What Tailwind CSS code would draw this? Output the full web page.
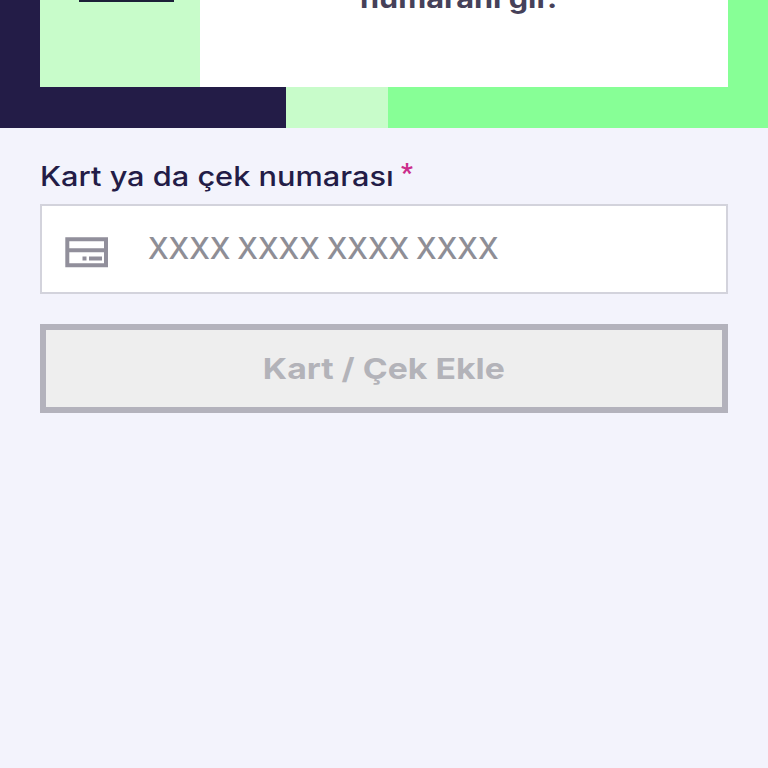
<!DOCTYPE html>
<html lang="tr">
<head>
<meta charset="utf-8">
<title>Kart / Çek Ekle</title>
<script src="https://cdn.jsdelivr.net/npm/@tailwindcss/browser@4"></script>
</head>
<body class="h-[768px] overflow-hidden bg-[#f3f3fc] font-['Inter',sans-serif] text-[#231c47]">
<header class="relative h-32 overflow-hidden">
  <div class="absolute inset-x-0 top-0 flex h-[127.5px]">
    <div class="w-[286px] bg-[#231c47]"></div>
    <div class="w-[101.5px] bg-[#c8fcca]"></div>
    <div class="flex-1 bg-[#87ff96]"></div>
  </div>
  <section class="relative mx-10 flex h-[86.5px] bg-white">
    <div class="flex w-40 justify-center bg-[#c8fcca]">
      <div class="ml-3 h-[2px] w-[95px] bg-[#1c2038]"></div>
    </div>
    <div class="relative flex-1">
      <p class="absolute -top-[19px] left-[160px] origin-left scale-x-[1.137] whitespace-nowrap text-[27px] leading-[36px] font-bold text-[#464159]">numaranı gir.</p>
    </div>
  </section>
</header>
<main class="px-10 pt-[31px]">
  <label for="card" class="flex h-[45px] items-start text-[27px] leading-[36px] font-medium">
    <span class="w-[361px] origin-left scale-x-[1.138] whitespace-nowrap">Kart ya da çek numarası</span>
    <span class="-mt-1 font-['Roboto',sans-serif] text-[26px] font-bold text-[#cb2d8c]">*</span>
  </label>
  <div class="flex h-[90px] items-center border-2 border-[#d3d3dc] bg-white pl-[23px]">
    <svg class="mt-[6px] h-[31px] w-[44px] shrink-0" viewBox="0 0 44 31" fill="none">
      <path d="M2.3 2.3H41V28.2H2.3ZM2.3 13.2H41" stroke="#918f9b" stroke-width="4"/>
      <path d="M17.5 19.5h4v4h-4zM24 19.5h13v4H24z" fill="#918f9b"/>
    </svg>
    <input id="card" class="mb-[3px] ml-[39px] h-12 w-[500px] origin-left scale-x-[0.981] text-[30px] font-medium [word-spacing:-1px] outline-none placeholder:text-[#8e8e96] placeholder:opacity-100" placeholder="XXXX XXXX XXXX XXXX">
  </div>
  <button disabled class="mt-[30px] flex h-[89px] w-full items-center justify-center border-[6px] border-[#b3b2bc] bg-[#eeeeee] text-[29px] font-bold text-[#b3b3b9]"><span class="scale-x-[1.165] whitespace-nowrap">Kart / Çek Ekle</span></button>
</main>
</body>
</html>
